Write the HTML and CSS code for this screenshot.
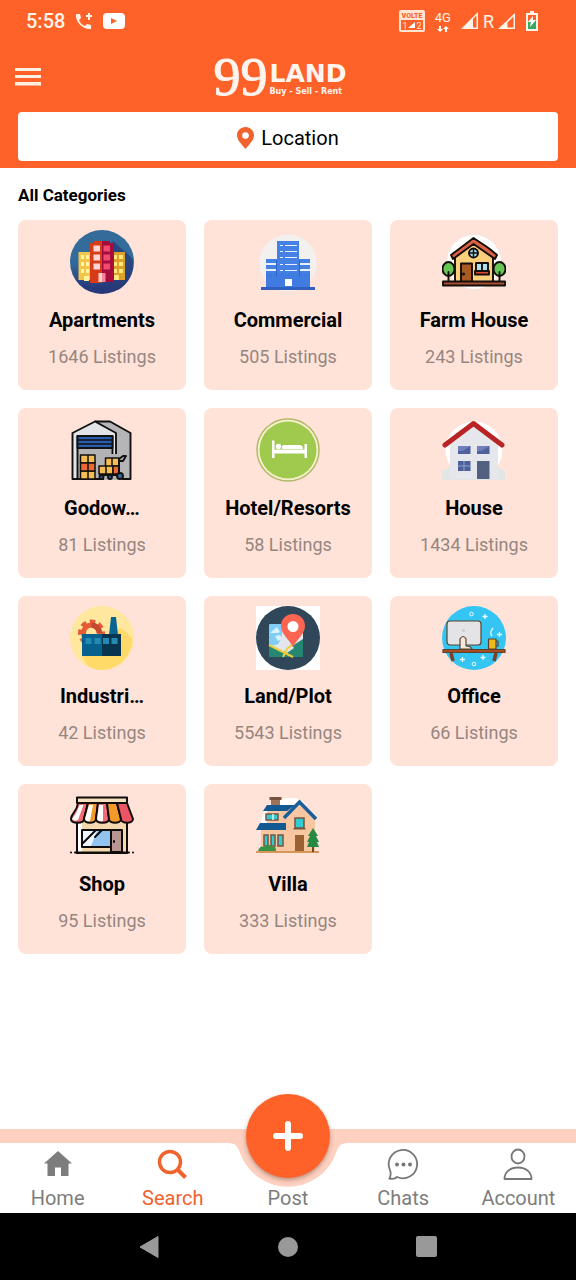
FILE: index.html
```html
<!DOCTYPE html>
<html lang="en">
  <head>
    <meta charset="UTF-8" />
    <meta name="viewport" content="width=device-width, initial-scale=1.0" />
    <title>99LAND - All Categories</title>
    <link rel="stylesheet" href="styles.css">
  </head>
  <body>
    <header class="header">
      <div class="status-bar">
        <div class="status-left">
          <span class="clock">5:58</span>
          <svg width="18" height="18" viewBox="0 0 18 18" fill="#fff4e8">
            <path d="M1 2h4l1 4-2 2c1 3 3 5 6 6l2-2 4 1v4C8 18 0 10 1 2z" />
            <path d="M13 1h2v2h2v2h-2v3h-2V5h-2V3h2z" />
          </svg>
          <svg width="22" height="16" viewBox="0 0 22 16">
            <rect width="22" height="16" rx="4" fill="#fff" />
            <path d="M8 5l6 3-6 3z" fill="#ff6229" />
          </svg>
        </div>
        <div class="status-right">
          <svg width="26" height="22" viewBox="0 0 26 22">
            <rect x="1" y="1" width="24" height="20" rx="1" fill="none" stroke="#ffe5d2" stroke-width="2" />
            <path d="M1 1h24v9H1z" fill="#ffe5d2" />
            <text x="13" y="8" class="volte" text-anchor="middle" fill="#ff6229">VOLTE</text>
            <text x="6" y="19" class="sim" text-anchor="middle" fill="#ffe5d2">1</text>
            <text x="20" y="19" class="sim" text-anchor="middle" fill="#ffe5d2">2</text>
            <path d="M9 18l7-6v6z" fill="#fff" />
          </svg>
          <span class="network">
            4G
            <svg width="12" height="6" viewBox="0 0 12 6" fill="#fff">
              <path d="M2 0h2v3h2L3 6 0 3h2zM8 6h2V3h2L9 0 6 3h2z" />
            </svg>
          </span>
          <span class="signal">
            <svg width="18" height="18" viewBox="0 0 18 18">
              <path d="M0 17L17 0v17z" fill="#fff4e8" />
              <path d="M12 7l3.500-3.500V15.500H12z" fill="#ff6229" />
            </svg>
            R
            <svg width="18" height="18" viewBox="0 0 18 18">
              <path d="M0 17L17 1v16z" fill="#fff4e8" />
              <path d="M9.500 10.500l6-6v11h-6z" fill="#ff6229" />
            </svg>
          </span>
          <svg width="12" height="20" viewBox="0 0 12 20">
            <path d="M4 0h4v2h4v18H0V2h4z" fill="#fff4e8" />
            <path d="M2 4h8v6H2z" fill="#ff6229" />
            <path d="M2 10h8v8H2z" fill="#39a863" />
            <path d="M7 5l-5 6h3l-1 5 6-7H7z" fill="#fff" />
          </svg>
        </div>
      </div>

      <div class="app-bar">
        <button class="menu-button" aria-label="Menu">
          <svg width="26" height="18" viewBox="0 0 26 18" fill="#fff0e4">
            <path d="M0 0h26v3H0zM0 7h26v3H0zM0 14h26v3.500H0z" />
          </svg>
        </button>
        <a class="logo" href="#">
          <span class="logo-number">99</span>
          <span class="logo-words">
            <strong>LAND</strong>
            <small>Buy - Sell - Rent</small>
          </span>
        </a>
      </div>

      <button class="location-button">
        <svg width="17" height="22" viewBox="0 0 17 22">
          <path d="M8.500 0C3.500 0 0 3.800 0 8.200 0 13 4.500 17 8.500 22 12.500 17 17 13 17 8.200 17 3.800 13.500 0 8.500 0z" fill="#f1632e" />
          <circle cx="8.500" cy="8.500" r="3.300" fill="#fff" />
        </svg>
        Location
      </button>
    </header>

    <main class="content">
      <h1>All Categories</h1>
      <div class="category-grid">
        <a class="card" href="#">
          <svg class="card-icon" viewBox="0 0 64 64">
            <defs>
              <linearGradient id="night" x1="0" y1="0" x2="0" y2="1">
                <stop offset=".5" stop-color="#336b9b" />
                <stop offset=".9" stop-color="#28397b" />
              </linearGradient>
            </defs>
            <circle cx="32" cy="32" r="32" fill="url(#night)" />
            <path d="M43 11l19 17c4 12-3 26-14 32L32 52z" fill="#273b75" opacity=".75" />
            <path d="M8.500 22H20v28H8.500z" fill="#f3c64a" />
            <path d="M43 22h12v28H43z" fill="#dca126" />
            <path d="M11 25h3v4h-3zM16 25h3v4h-3zM11 32h3v4h-3zM16 32h3v4h-3zM11 39h3v4h-3zM16 39h3v4h-3zM14 46h5v5h-5z" fill="#fff3a4" />
            <path d="M44 25h3v4h-3zM49 25h4v4h-4zM44 32h3v4h-3zM49 32h4v4h-4zM44 39h3v4h-3zM49 39h4v4h-4zM44 45h5v5h-5z" fill="#ffe77d" />
            <path d="M20 13h4v-2h8v42H20z" fill="#d83b18" />
            <path d="M32 11h8v2h4v39H32z" fill="#a60c3c" />
            <path d="M23.500 15.500H30v6h-6.500zM23.500 24.500H30v6h-6.500zM23.500 33.500H30v6h-6.500z" fill="#ffd8d6" />
            <path d="M33.500 15.500H40v6h-6.500zM33.500 24.500H40v6h-6.500zM33.500 33.500H40v6h-6.500z" fill="#f04c70" />
            <path d="M28.500 43H32v9h-3.500z" fill="#ffd0cd" />
            <path d="M32 43h3.500v9H32z" fill="#f8849a" />
          </svg>
          <h2>Apartments</h2>
          <p>1646 Listings</p>
        </a>

        <a class="card" href="#">
          <svg class="card-icon" viewBox="0 0 64 64">
            <circle cx="32" cy="33" r="28.500" fill="#f2f1f0" />
            <path d="M21 11h22v18h11v28H10V29h11z" fill="#4581e5" />
            <path d="M10 43h44v14H10z" fill="#3f7be0" />
            <path d="M5 57h54v3H5z" fill="#315fc0" />
            <path d="M29 15h12v1H29zM29 21h12v1H29zM29 27h12v1H29zM29 34h12v1H29zM29 40h12v1H29zM10 33h10v2H10zM10 39h10v2H10zM44 33h10v2H44zM44 39h10v2H44z" fill="#e6f0ff" />
            <path d="M24 15h3v1h-3zM24 21h3v1h-3zM24 27h3v1h-3zM24 34h3v1h-3zM24 40h3v1h-3z" fill="#e6f0ff" />
            <path d="M20 30h1v17h-1zM43 30h1v17h-1z" fill="#2d63cb" />
            <path d="M29 49h7v7h-7z" fill="#fff" />
          </svg>
          <h2>Commercial</h2>
          <p>505 Listings</p>
        </a>

        <a class="card" href="#">
          <svg class="card-icon" viewBox="0 0 64 64" stroke="#140d0a" stroke-width="1.900" stroke-linejoin="round" stroke-linecap="round">
            <circle cx="32" cy="32" r="27.500" fill="#fff" stroke="#f2e4df" stroke-width="1" />
            <path d="M13 27L31.500 11 51 27v25H13z" fill="#fbcf7c" />
            <path d="M31.500 8L9 25l2 4 20.500-15L53 29l2-4-6-5-4-3z" fill="#da6144" />
            <circle cx="31.500" cy="23" r="4.500" fill="#9bd6e8" />
            <path d="M31.500 19v8M27.500 23h8" stroke-width="1.400" />
            <path d="M19 33.500h11V52H19z" fill="#a75a24" />
            <circle cx="21.500" cy="44" r=".6" fill="#140d0a" />
            <path d="M34 33h12v9H34z" fill="#aee2ef" />
            <path d="M40 33v9" />
            <path d="M33 41h14v3.500H33z" fill="#df4830" />
            <ellipse cx="6.500" cy="39" rx="6" ry="7" fill="#66c654" />
            <ellipse cx="57.500" cy="39" rx="6" ry="7" fill="#66c654" />
            <path d="M6.500 42v9M57.500 42v9" />
            <path d="M1 51.500h62v4H1z" fill="#a64e30" />
          </svg>
          <h2>Farm House</h2>
          <p>243 Listings</p>
        </a>

        <a class="card" href="#">
          <svg class="card-icon" viewBox="0 0 64 64" stroke="#111" stroke-width="1.900" stroke-linejoin="round">
            <path d="M25 3.500h15L60.500 15v46H44V15z" fill="#b5b5b8" />
            <path d="M2.500 15L25 3.500 46 15v46H2.500z" fill="#e3e4e8" />
            <path d="M7.500 18h35v43h-35z" fill="#b3b3b5" />
            <path d="M7.500 18h35v12h-35z" fill="#285ead" />
            <path d="M7.500 22h35M7.500 26h35" stroke-width="1.400" />
            <path d="M34 62V36h18v26z" fill="#b3b3b5" stroke="none" />
            <g fill="#f5bd52" stroke-width="1.500">
              <path d="M10.500 37H18v8h-7.500zM18 37h7v8h-7zM10.500 53H18v8h-7.500zM18 53h7v8h-7z" />
              <path d="M10.500 45H18v8h-7.500zM18 45h7v8h-7z" fill="#ed6934" />
              <path d="M35.500 40H42v8h-6.500zM42 40h7v8h-7zM29 48h7v8h-7zM36 48h7v8h-7z" />
              <path d="M43 48h6v8h-6z" fill="#ed6934" />
            </g>
            <path d="M29 57h20V41l4-3h3l-3 5h-4" fill="none" />
            <circle cx="31.500" cy="59" r="2" fill="#39689b" />
            <circle cx="40" cy="59" r="2" fill="#39689b" />
            <circle cx="50" cy="58" r="3" fill="#39689b" />
            <path d="M55 61h6" />
          </svg>
          <h2>Godow…</h2>
          <p>81 Listings</p>
        </a>

        <a class="card" href="#">
          <svg class="card-icon" viewBox="0 0 64 64">
            <circle cx="32" cy="32" r="31" fill="#faf0cf" stroke="#b1ba67" stroke-width="1.500" />
            <circle cx="32" cy="32" r="28.500" fill="#a0ca4e" />
            <path d="M16 22.500h2.500v9h30V26H51v14h-2.500v-4.500h-30V40H16z" fill="#fff" />
            <circle cx="22.500" cy="28.500" r="2.800" fill="#fff" />
            <path d="M26 31v-3q1-1 3-1h14q4 0 4 4z" fill="#fff" />
          </svg>
          <h2>Hotel/Resorts</h2>
          <p>58 Listings</p>
        </a>

        <a class="card" href="#">
          <svg class="card-icon" viewBox="0 0 64 64">
            <circle cx="32" cy="32" r="28.500" fill="#fff" />
            <path d="M0 52h4l3-3h50l3 3h3v10H0z" fill="#e1e5e4" />
            <path d="M8 25L31.500 7 56 25v36H8z" fill="#e5e7ec" />
            <path d="M3 27L31.500 5.500 60 27" fill="none" stroke="#b92323" stroke-width="5" stroke-linejoin="round" stroke-linecap="round" />
            <path d="M16 28h12.500v8H16zM35 28h12.500v8H35z" fill="#50609a" />
            <path d="M16 28h12.500l-8 5H16zM35 28h12.500l-8 5H35z" fill="#7180bd" />
            <path d="M16 43h12.500v10H16z" fill="#4c6198" />
            <path d="M22 43v10M16 48h12.500" stroke="#8fa2d4" />
            <path d="M35 43h12.500v18H35z" fill="#536181" />
          </svg>
          <h2>House</h2>
          <p>1434 Listings</p>
        </a>

        <a class="card" href="#">
          <svg class="card-icon" viewBox="0 0 64 64">
            <circle cx="32" cy="32" r="32" fill="#ffe79d" />
            <path d="M51 22l11 10c1 16-13 32-30 32-6 0-11-2-15-5l-5-9z" fill="#ffda68" />
            <circle cx="21.500" cy="27" r="11" fill="none" stroke="#e55b35" stroke-width="5" stroke-dasharray="5.200 3.440" stroke-dashoffset="2" />
            <circle cx="21.500" cy="27" r="8" fill="none" stroke="#e55b35" stroke-width="5" />
            <path d="M21.500 16.500A10.500 10.500 0 0 1 32 27h-5.500a5 5 0 0 0-5-5z" fill="#c34a30" />
            <path d="M39 29l2-18h5l2 18z" fill="#086591" />
            <path d="M12 28h20v22H12z" fill="#07618e" />
            <path d="M32 28h19v22H32z" fill="#08344f" />
            <path d="M15.500 32h6v6h-6zM24.500 32h6v6h-6zM33 32h6v6h-6zM41.500 32h6v6h-6z" fill="#228bb4" />
          </svg>
          <h2>Industri…</h2>
          <p>42 Listings</p>
        </a>

        <a class="card" href="#">
          <svg class="card-icon" viewBox="0 0 64 64">
            <path d="M0 0h64v64H0z" fill="#fff" />
            <circle cx="32" cy="32" r="32" fill="#2f4758" />
            <rect x="13" y="18" width="34" height="33" rx="2" fill="#e3e6ef" />
            <path d="M13 20q0-2 2-2h13l-4 20-11 2z" fill="#80cdf5" />
            <path d="M14 27l7-6 3 5-2 1zM19 30l5-1 2 4-4 2z" fill="#d8f2ff" />
            <path d="M13 39l14 7 20-13v18H13z" fill="#258771" />
            <path d="M20 41l8-12 10 13-7 5z" fill="#e3e6ef" />
            <path d="M13 39l24 12" stroke="#edcf3d" stroke-width="2" />
            <path d="M27 51l4-8 6-5" fill="none" stroke="#edcf3d" stroke-width="2" />
            <path d="M37 8c-7 0-12 5-12 12 0 8 8 13 12 21 4-8 12-13 12-21 0-7-5-12-12-12z" fill="#fb6551" />
            <circle cx="37" cy="20.500" r="5.500" fill="#fff" />
          </svg>
          <h2>Land/Plot</h2>
          <p>5543 Listings</p>
        </a>

        <a class="card" href="#">
          <svg class="card-icon" viewBox="0 0 64 64">
            <circle cx="32" cy="32" r="32" fill="#35c5f2" />
            <g stroke="#59432d" stroke-width="1.200" stroke-linejoin="round">
              <path d="M9 47l2 8M54 47l-2 8" stroke="#7c4128" stroke-width="3.500" />
              <rect x="5" y="15" width="34" height="24" rx="3" fill="#e4e4e6" />
              <path d="M18 42V33q3-5 6 0v7q5 0 6 3H18z" fill="#f7e7df" />
              <path d="M1 43.500h62v3H1z" fill="#a84c27" />
              <path d="M46.500 33H54v10h-7.500z" fill="#eeb91d" />
              <path d="M54 35h2v5h-2" fill="none" />
            </g>
            <path d="M50 30q-3-3 1-8M43 8v5M40.500 10.500h5M57.500 26v5M55 28.500h5M20.500 51v5M18 53.500h5M41 49v5M38.500 51.500h5" fill="none" stroke="#e9fbff" stroke-width="1.300" />
            <circle cx="29.500" cy="8" r="1.800" fill="none" stroke="#e9fbff" />
            <circle cx="32" cy="58" r="1.800" fill="none" stroke="#e9fbff" />
            <circle cx="21.500" cy="24.500" r="1.500" fill="#c9c9ce" />
          </svg>
          <h2>Office</h2>
          <p>66 Listings</p>
        </a>

        <a class="card" href="#">
          <svg class="card-icon" viewBox="0 0 64 64" stroke="#100c0b" stroke-width="2" stroke-linejoin="round" stroke-linecap="round">
            <path d="M7 25h50v34H7z" fill="#f4d9af" />
            <path d="M7 27h5v31H7z" fill="#fff" stroke="none" />
            <path d="M7 59V28M57 59V28" />
            <path d="M7 3.500h50V9H7z" fill="#f7dfbd" />
            <path d="M8 9h10l-4 16c0 5-13 5-13 0 0-6 6-7 7-16z" fill="#f36a75" />
            <path d="M18 9h10l-2 16c0 5-12 5-12 0z" fill="#f49a2b" />
            <path d="M28 9h9l2 16c0 5-13 5-13 0z" fill="#f36a75" />
            <path d="M37 9h10l4 16c0 5-12 5-12 0z" fill="#f49a2b" />
            <path d="M47 9h10l6 16c0 5-12 5-12 0z" fill="#ed5565" />
            <path d="M9.500 11h4L8 26q-4 2-6-1 5-6 7.500-14zM19 11h4l-3 16q-4 1-5-2zM29 11h4v16q-5 1-6-2z" fill="#fff" stroke="none" />
            <path d="M12 36h29v17H12z" fill="#91c4ee" />
            <path d="M13 37h14l-6 15h-8z" fill="#edf7ff" stroke="none" />
            <path d="M13 49l13-13M25 43l7-7" />
            <path d="M41 36h11v22H41z" fill="#b99691" />
            <path d="M44 47v1M5 58.500h54M1 58.500h.1M63 58.500h.1" />
          </svg>
          <h2>Shop</h2>
          <p>95 Listings</p>
        </a>

        <a class="card" href="#">
          <svg class="card-icon" viewBox="0 0 64 64">
            <path d="M5 29q2-24 31-25 10 0 14 8L29 32z" fill="#fff" />
            <path d="M11 16h20l12-8 16 17v33H5V35l6-7z" fill="#f8c7a1" />
            <path d="M15 5h9v8h-9z" fill="#9e7459" />
            <path d="M13.500 3h12v3h-12z" fill="#75533e" />
            <path d="M11 11h28l-8 6H7zM4 29h26v7H0z" fill="#125a91" />
            <path d="M28 24L43.500 8 60 25" fill="none" stroke="#195f9b" stroke-width="3.500" />
            <g fill="#31cbd0" stroke="#745640" stroke-width="1.500">
              <path d="M10 20h12v6H10zM39 24h9v10h-9zM8 41h4v11H8zM15 41h4v11h-4zM22 41h5v11h-5z" />
            </g>
            <path d="M37.500 34h12v1.500h-12z" fill="#745640" />
            <path d="M39 41h9v17h-9z" fill="#9a6132" />
            <path d="M17 20v6" stroke="#e1f6ef" stroke-width="1.500" />
            <path d="M0 57h63v2H0z" fill="#d69657" />
            <path d="M2 57q2-6 6-4 4-5 8 0 4-2 4 4z" fill="#369345" />
            <path d="M57 48v10" stroke="#754b27" stroke-width="2" />
            <path d="M57 34l5 8h-2l3 6h-2l2 5H51l2-5h-2l3-6h-2z" fill="#258b43" />
          </svg>
          <h2>Villa</h2>
          <p>333 Listings</p>
        </a>
      </div>
    </main>

    <nav class="tab-bar">
      <svg class="notch" width="120" height="45" viewBox="0 0 120 45">
        <path d="M0 0C8 0 10 4 12 10A51 51 0 0 0 108 10C110 4 112 0 120 0z" fill="#fdd0c0" />
      </svg>
      <a class="tab" href="#">
        <svg width="32" height="32" viewBox="0 0 32 32">
          <path d="M16 3L2 15.500h3.500V28H13v-8.500h6V28h7.500V15.500H30z" fill="#7d7d7d" />
        </svg>
        Home
      </a>
      <a class="tab active" href="#">
        <svg width="32" height="32" viewBox="0 0 32 32" fill="none" stroke="#f1632e">
          <circle cx="13" cy="14" r="10.500" stroke-width="3.500" />
          <path d="M20.500 21.500l8 8" stroke-width="4" />
        </svg>
        Search
      </a>
      <a class="tab" href="#">
        <span class="tab-space"></span>
        Post
      </a>
      <a class="tab" href="#">
        <svg width="32" height="32" viewBox="0 0 32 32" fill="none" stroke="#777" stroke-width="1.800">
          <path d="M3 22A14.200 14.200 0 1 1 10 29q-2.500 2.500-7.500 1.500 2-4 .5-8.500z" />
          <g fill="#777" stroke="none">
            <circle cx="10" cy="16.500" r="2" />
            <circle cx="16.500" cy="16.500" r="2" />
            <circle cx="23" cy="16.500" r="2" />
          </g>
        </svg>
        Chats
      </a>
      <a class="tab" href="#">
        <svg width="32" height="32" viewBox="0 0 32 32" fill="none" stroke="#777" stroke-width="1.800" stroke-linejoin="round">
          <ellipse cx="16" cy="8.500" rx="6.500" ry="7" />
          <path d="M2.500 31c0-6.500 5-11.500 13.500-11.500S29.500 24.500 29.500 31z" />
        </svg>
        Account
      </a>
      <button class="post-button" aria-label="New post">
        <svg width="32" height="32" viewBox="0 0 32 32" stroke="#fff" stroke-width="6" stroke-linecap="round">
          <path d="M16 4v24M4 16h24" />
        </svg>
      </button>
    </nav>

    <footer class="system-bar">
      <button aria-label="Back">
        <svg width="22" height="24" viewBox="0 0 22 24">
          <path d="M20 1.500v21L2 12z" fill="#999" stroke="#999" stroke-linejoin="round" />
        </svg>
      </button>
      <button aria-label="Home screen">
        <svg width="22" height="24" viewBox="0 0 22 24">
          <circle cx="11" cy="12" r="10" fill="#999" />
        </svg>
      </button>
      <button aria-label="Recent apps">
        <svg width="22" height="24" viewBox="0 0 22 24">
          <rect x="0" y="1" width="21" height="21" rx="2" fill="#999" />
        </svg>
      </button>
    </footer>
  </body>
</html>
```
FILE: styles.css
```css
* {
  box-sizing: border-box;
}
body {
  margin: 0;
  min-height: 100vh;
  display: flex;
  flex-direction: column;
  background: #fff;
  font-family: Roboto, sans-serif;
  color: #000;
}
svg {
  display: block;
  flex: none;
}
a {
  color: inherit;
  text-decoration: none;
}
button {
  border: 0;
  padding: 0;
  background: none;
  font: inherit;
  color: inherit;
  cursor: pointer;
}

.header {
  padding-bottom: 7px;
  background: #ff6229;
}
.status-bar {
  height: 42px;
  padding: 0 38px 0 26px;
  display: flex;
  justify-content: space-between;
  align-items: center;
  color: #fff4e8;
}
.status-left,
.status-right {
  display: flex;
  align-items: center;
  gap: 10px;
}
.clock {
  font-size: 20px;
  font-weight: 500;
}
.volte {
  font-size: 7px;
  font-weight: 900;
}
.sim {
  font-size: 9px;
}
.network {
  display: flex;
  flex-direction: column;
  align-items: center;
  gap: 1px;
  font-size: 13px;
  line-height: 14px;
}
.signal {
  display: flex;
  align-items: center;
  gap: 4px;
  font-size: 18px;
}

.app-bar {
  height: 70px;
  padding: 0 31px 0 15px;
  display: grid;
  grid-template-columns: 1fr auto 1fr;
  align-items: center;
}
.menu-button {
  justify-self: start;
}
.logo {
  display: flex;
  align-items: center;
  gap: 2px;
  color: #fff4ee;
}
.logo-number {
  font-family: "Liberation Serif", serif;
  font-size: 54px;
  line-height: 60px;
  -webkit-text-stroke: 1px #fff4ee;
}
.logo-words {
  padding-top: 4px;
  display: flex;
  flex-direction: column;
  font-family: "DejaVu Sans", sans-serif;
  font-weight: 700;
}
.logo-words strong {
  font-size: 25px;
  line-height: 26px;
}
.logo-words small {
  font-size: 8px;
  line-height: 10px;
}

.location-button {
  width: calc(100% - 36px);
  height: 49px;
  margin: 0 18px;
  padding-top: 2px;
  display: flex;
  justify-content: center;
  align-items: center;
  gap: 7px;
  border-radius: 4px;
  background: #fff;
  font-size: 20px;
}

.content {
  flex: 1;
  padding: 17px 18px;
}
h1 {
  margin: 0 0 15px;
  font-size: 17px;
  line-height: 20px;
  font-weight: 700;
}
.category-grid {
  display: grid;
  grid-template-columns: repeat(3, 1fr);
  gap: 18px;
}
.card {
  min-width: 0;
  padding: 10px 8px 21px;
  display: flex;
  flex-direction: column;
  align-items: center;
  border-radius: 8px;
  background: #ffe3d9;
}
.card-icon {
  width: 64px;
  height: 64px;
}
.card h2 {
  margin: 14px 0 13px;
  font-size: 20px;
  line-height: 24px;
  font-weight: 700;
}
.card p {
  margin: 0;
  color: #968680;
  font-size: 18px;
  line-height: 24px;
}

.tab-bar {
  position: relative;
  padding: 5px 0 3px;
  display: grid;
  grid-template-columns: repeat(5, 1fr);
  border-top: 14px solid #fdd0c0;
  background: #fff;
}
.tab {
  display: flex;
  flex-direction: column;
  align-items: center;
  gap: 6px;
  color: #7d7d7d;
  font-size: 20px;
  line-height: 24px;
}
.tab.active {
  color: #f1632e;
}
.tab-space {
  height: 32px;
}
.notch {
  position: absolute;
  top: 0;
  left: calc(50% - 60px);
}
.post-button {
  position: absolute;
  top: -49px;
  left: calc(50% - 42px);
  width: 84px;
  height: 84px;
  display: flex;
  justify-content: center;
  align-items: center;
  border-radius: 50%;
  background: #ff6229;
  box-shadow: 0 2px 4px rgba(90, 40, 20, 0.4);
}

.system-bar {
  height: 67px;
  display: flex;
  justify-content: center;
  align-items: center;
  gap: 117px;
  background: #000;
}
```
